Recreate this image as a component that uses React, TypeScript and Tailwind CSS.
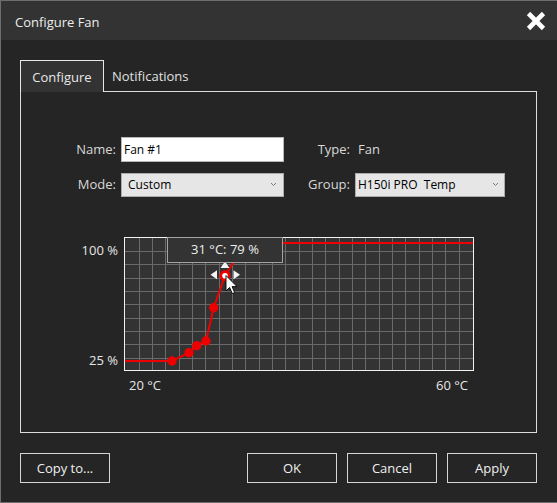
import React from "react";

const FONT = { fontFamily: '"Open Sans", "Noto Sans", sans-serif' };

function Chevron() {
  return (
    <svg width="7" height="5" viewBox="0 0 7 5" className="shrink-0">
      <path d="M1 1 L3.5 3.5 L6 1" fill="none" stroke="#7a7a7a" strokeWidth="1" />
    </svg>
  );
}

function Chart() {
  const vx: number[] = [];
  for (let k = 0; k < 25; k++) vx.push(Math.round(14.7 + 13.33 * k) + 0.5);
  const hy: number[] = [];
  for (let k = 0; k < 9; k++) hy.push(Math.round(14 + 13.33 * k) + 0.5);
  const pts: [number, number][] = [
    [48, 124],
    [65, 115.7],
    [72.7, 108.7],
    [82, 104],
    [89.7, 70.7],
  ];
  const line = "1,124 48,124 65,115.7 72.7,108.7 82,104 89.7,70.7 101,38.7 122,6 349,6";
  return (
    <svg width="350" height="134" viewBox="0 0 350 134" className="block">
      <rect x="0" y="0" width="350" height="134" fill="#333333" />
      {vx.map((x) => (
        <line key={"v" + x} x1={x} y1="0" x2={x} y2="134" stroke="#6a6a6a" strokeWidth="1" />
      ))}
      {hy.map((y) => (
        <line key={"h" + y} x1="0" y1={y} x2="350" y2={y} stroke="#6a6a6a" strokeWidth="1" />
      ))}
      <rect x="0.5" y="0.5" width="349" height="133" fill="none" stroke="#f2f2f2" strokeWidth="1" />
      <polyline points={line} fill="none" stroke="#ee0000" strokeWidth="2" />
      {pts.map(([x, y]) => (
        <circle key={x} cx={x} cy={y} r="4.7" fill="#ee0000" />
      ))}
      <circle cx="122" cy="6" r="4.7" fill="#ee0000" />
      {/* selected point */}
      <circle cx="101" cy="38.7" r="5.6" fill="#ee0000" />
      <circle cx="101" cy="38.7" r="2.8" fill="#ffffff" />
      {/* move arrows */}
      <polygon points="101,24.5 96.5,31 105.5,31" fill="#f4f4f4" />
      <polygon points="86.5,37.7 93,33.2 93,42.2" fill="#f4f4f4" />
      <polygon points="116,37.7 109.5,33.2 109.5,42.2" fill="#f4f4f4" />
      {/* mouse pointer */}
      <path
        d="M102 38.5 L102 54 L105.6 50.4 L108.3 56.6 L110.7 55.6 L108.1 49.6 L113 49.6 Z"
        fill="#ffffff"
        stroke="#000000"
        strokeWidth="0.9"
        strokeLinejoin="miter"
      />
    </svg>
  );
}

function Btn({ children }: { children: React.ReactNode }) {
  return (
    <button className="w-[90px] h-[30px] border border-[#d6d6d6] bg-[#252525] text-[#f0f0f0] text-[13px] flex items-center justify-center pt-px">
      {children}
    </button>
  );
}

export default function App() {
  return (
    <div
      style={FONT}
      className="w-[557px] h-[503px] bg-[#252525] border-l border-t border-b border-[#6e6e6e] flex flex-col overflow-hidden"
    >
      {/* title bar */}
      <div className="h-[39px] shrink-0 bg-[#333333] flex items-center justify-between pl-[14px] pr-[11px]">
        <span className="text-[13px] text-[#ececec] pt-[4px]">Configure Fan</span>
        <svg width="20" height="20" viewBox="0 0 20 20">
          <line x1="2.5" y1="2.5" x2="17.5" y2="17.5" stroke="#ffffff" strokeWidth="4.6" />
          <line x1="17.5" y1="2.5" x2="2.5" y2="17.5" stroke="#ffffff" strokeWidth="4.6" />
        </svg>
      </div>

      <div className="flex-1 flex flex-col pl-[19px] pt-[20px]">
        {/* tabs */}
        <div className="h-[31px] flex items-start">
          <div className="relative z-10 w-[84px] h-[32px] border-t border-l border-r border-[#e8e8e8] bg-[#333333] flex items-center justify-center text-[13px] text-[#e8e8e8] pt-[2px]">
            Configure
          </div>
          <div className="h-[31px] pl-[8px] flex items-center text-[13px] text-[#e0e0e0] pt-[3px]">Notifications</div>
        </div>

        {/* panel */}
        <div className="w-[517px] h-[342px] border border-[#dcdcdc] flex flex-col">
          <div className="mt-[45px] h-[25px] flex items-center">
            <div className="w-[95px] text-right text-[13px] text-[#d8d8d8]">Name:</div>
            <div className="ml-[5px] w-[163px] h-[25px] bg-white border border-[#b9b9b9] flex items-center pl-[2px] text-[12px] text-black">
              Fan #1
            </div>
            <div className="w-[66px] text-right text-[13px] text-[#d8d8d8]">Type:</div>
            <div className="ml-[8px] text-[13px] text-[#d8d8d8]">Fan</div>
          </div>
          <div className="mt-[10px] h-[25px] flex items-center">
            <div className="w-[95px] text-right text-[13px] text-[#d8d8d8]">Mode:</div>
            <div className="ml-[5px] w-[163px] h-[24px] bg-[#e6e6e6] border border-[#acacac] flex items-center justify-between pl-[6px] pr-[6px] text-[12px] text-black">
              <span>Custom</span>
              <Chevron />
            </div>
            <div className="w-[66px] text-right text-[13px] text-[#d8d8d8]">Group:</div>
            <div className="ml-[5px] w-[150px] h-[24px] bg-[#e6e6e6] border border-[#acacac] flex items-center justify-between pl-[2px] pr-[5px] text-[12px] text-black">
              <span>H150i PRO&nbsp; Temp</span>
              <Chevron />
            </div>
          </div>

          {/* chart */}
          <div className="mt-[40px] flex">
            <div className="relative w-[103px] h-[134px] text-[13px] text-[#e6e6e6]">
              <div className="absolute right-[6px] top-[3px] leading-[20px]">100 %</div>
              <div className="absolute right-[6px] top-[113px] leading-[20px]">25 %</div>
            </div>
            <div className="flex flex-col">
              <div className="relative w-[350px] h-[134px]">
                <Chart />
                <div className="absolute left-[43px] top-0 w-[116px] h-[26px] bg-[#333333] border border-[#a3a3a3] flex items-center justify-center text-[13px] text-[#eeeeee]">
                  31 °C: 79 %
                </div>
              </div>
              <div className="mt-[4px] flex justify-between pl-[5px] pr-[6px] text-[13px] text-[#e6e6e6] leading-[20px]">
                <span>20 °C</span>
                <span>60 °C</span>
              </div>
            </div>
          </div>
        </div>

        {/* buttons */}
        <div className="mt-[20px] w-[517px] flex items-center">
          <Btn>Copy to...</Btn>
          <div className="flex-1" />
          <div className="flex gap-[10px]">
            <Btn>OK</Btn>
            <Btn>Cancel</Btn>
            <Btn>Apply</Btn>
          </div>
        </div>
      </div>
    </div>
  );
}
